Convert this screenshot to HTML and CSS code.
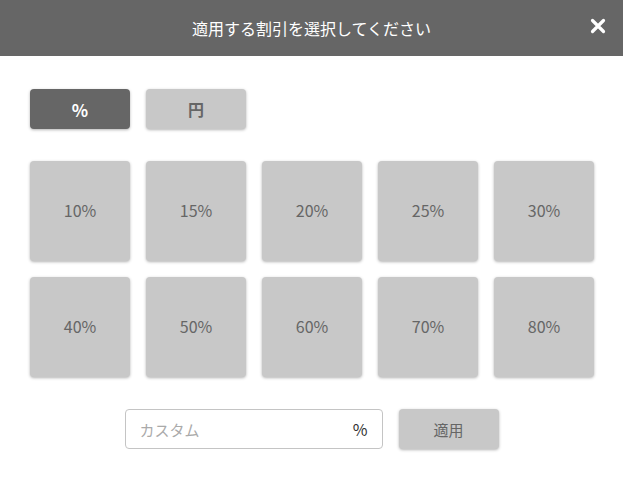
FILE: index.html
```html
<!DOCTYPE html>
<html lang="ja">
<head>
    <meta charset="UTF-8">
    <meta name="viewport" content="width=device-width, initial-scale=1.0">
    <title>割引選択</title>
    <link rel="stylesheet" href="styles.css">
</head>
<body>
    <div class="dialog">
        <div class="header">
            <h1>適用する割引を選択してください</h1>
            <button class="close" aria-label="閉じる">
                <svg width="16" height="16" viewBox="0 0 16 16">
                    <path d="M2.5 2.5 L13.5 13.5 M13.5 2.5 L2.5 13.5" stroke="#fff" stroke-width="3.2" stroke-linecap="round"/>
                </svg>
            </button>
        </div>

        <div class="content">
            <div class="toggle">
                <button class="btn active">%</button>
                <button class="btn">円</button>
            </div>

            <div class="grid">
                <button class="tile">10%</button>
                <button class="tile">15%</button>
                <button class="tile">20%</button>
                <button class="tile">25%</button>
                <button class="tile">30%</button>
                <button class="tile">40%</button>
                <button class="tile">50%</button>
                <button class="tile">60%</button>
                <button class="tile">70%</button>
                <button class="tile">80%</button>
            </div>

            <div class="custom">
                <label class="field">
                    <input type="text" placeholder="カスタム">
                    <span class="unit">%</span>
                </label>
                <button class="apply">適用</button>
            </div>
        </div>
    </div>
</body>
</html>
```

FILE: styles.css
```css
* {
    margin: 0;
    padding: 0;
    box-sizing: border-box;
    font-family: "Noto Sans CJK JP", sans-serif;
}

body {
    background: #fff;
    width: 623px;
    height: 479px;
    overflow: hidden;
}

.header {
    height: 56px;
    background: #666;
    display: flex;
    align-items: center;
    justify-content: center;
    position: relative;
}

.header h1 {
    color: #fff;
    font-size: 16px;
    font-weight: 400;
}

.close {
    position: absolute;
    right: 17px;
    top: 18px;
    background: none;
    border: none;
    width: 16px;
    height: 16px;
    display: flex;
    cursor: pointer;
}

.content {
    padding: 33px 30px 0;
}

button {
    border: none;
    cursor: pointer;
    font-family: "Noto Sans CJK JP", sans-serif;
}

.toggle {
    display: flex;
    gap: 16px;
}

.btn {
    width: 100px;
    height: 40px;
    border-radius: 4px;
    background: #c8c8c8;
    color: #666;
    font-size: 16px;
    font-weight: 700;
    box-shadow: 0 1px 3px rgba(0, 0, 0, 0.3);
}

.btn.active {
    background: #666;
    color: #fff;
    font-size: 17px;
}

.grid {
    margin-top: 32px;
    display: grid;
    grid-template-columns: repeat(5, 100px);
    grid-auto-rows: 100px;
    gap: 16px;
}

.tile {
    background: #c8c8c8;
    border-radius: 4px;
    color: #666;
    font-size: 16px;
    padding-bottom: 2px;
    box-shadow: 0 1px 3px rgba(0, 0, 0, 0.3);
}

.custom {
    margin-top: 32px;
    display: flex;
    justify-content: center;
    gap: 16px;
}

.field {
    width: 258px;
    height: 40px;
    border: 1px solid #c4c4c4;
    border-radius: 4px;
    display: flex;
    align-items: center;
    padding: 0 14px;
}

.field input {
    flex: 1;
    min-width: 0;
    border: none;
    outline: none;
    font-size: 15px;
    color: #333;
    background: transparent;
    font-family: "Noto Sans CJK JP", sans-serif;
}

.field input::placeholder {
    color: #aaa;
}

.unit {
    font-size: 16px;
    color: #333;
}

.apply {
    width: 100px;
    height: 40px;
    border-radius: 4px;
    background: #c8c8c8;
    color: #666;
    font-size: 15px;
    box-shadow: 0 1px 3px rgba(0, 0, 0, 0.3);
}
```
